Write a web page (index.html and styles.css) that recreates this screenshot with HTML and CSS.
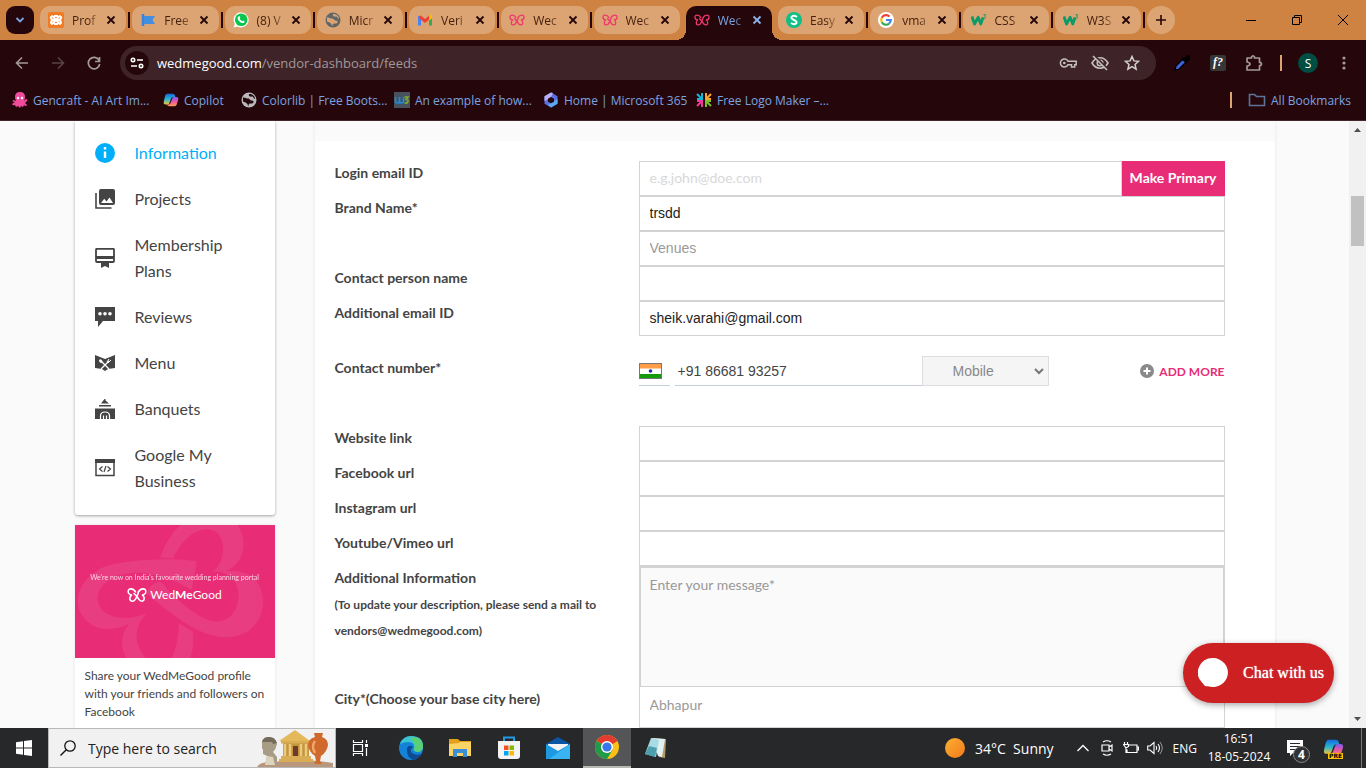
FILE: index.html
```html
<!DOCTYPE html>
<html lang="en">
<head>
<meta charset="utf-8">
<title>WedMeGood vendor dashboard</title>
<link rel="stylesheet" href="styles.css">
</head>
<body>
<svg class="defs" aria-hidden="true">
  <symbol id="x" viewBox="0 0 10 10"><path d="M1.500 1.500l7 7M8.500 1.500l-7 7" fill="none" stroke="currentColor" stroke-width="1.800"/></symbol>
  <symbol id="butterfly" viewBox="0 0 20 16"><path d="M8.500 5C6.500 1 1.200.8 1.200 4.500 1.200 6.500 3 8 5 8 2.200 9 2 13.800 5 14.200 8.500 14.500 9 11 10 9 11 7 11.500 5.500 11.500 4.500M11.500 5C13.500 1 18.800.8 18.800 4.500 18.800 6.500 17 8 15 8 17.800 9 18 13.800 15 14.200 12 14.500 11.500 11.500 10 9.500L7 6.500" fill="none" stroke="currentColor" stroke-width="1.600" stroke-linecap="round"/></symbol>
  <symbol id="globe" viewBox="0 0 16 16"><circle cx="8" cy="8" r="7.500" fill="currentColor"/><path d="M2 5.500C4 5 5 6.500 7 6.500S8.500 8.500 11 8.500 13 12 10 11.500 8 14 7 14C7 11.500 5 10.500 2 9.500ZM8 2C7 4 9.500 5 11 4.500S12 6.500 14 7C14 4 11.500 2 8 2Z" fill="var(--hole)"/></symbol>
  <symbol id="w3" viewBox="0 0 18 16"><path d="M1 4l3 8.500L8 5l3 7.500L13.500 5" fill="none" stroke="#0a9b68" stroke-width="3.200" stroke-linejoin="round"/><path d="M14 2h2.500l-1.300 1.800q1.800.2.800 2t-2.200.2" fill="none" stroke="#0a9b68"/></symbol>
  <symbol id="copilot" viewBox="0 0 18 16"><linearGradient id="cg1" x1="0" y1="0" x2="0" y2="1"><stop stop-color="#1769e0"/><stop offset=".5" stop-color="#26b6d0"/><stop offset="1" stop-color="#f0c23c"/></linearGradient><linearGradient id="cg2" x1="0" y1="0" x2="0" y2="1"><stop stop-color="#7a5cf0"/><stop offset=".5" stop-color="#e955a8"/><stop offset="1" stop-color="#ff9a4a"/></linearGradient><path d="M5 1h6q2 0 2.500 2l.5 2H11q-1.500 0-2 1.500L7 12q-.5 1-1.500 1H3Q0 13 1 9L2.500 3Q3.200 1 5 1Z" fill="url(#cg1)"/><path d="M13 15H7Q5 15 4.500 13h2q1.500 0 2-1.500L10.500 6q.5-1.500 2-1.500H15Q18 4.500 17 8l-1.500 5q-.7 2-2.500 2Z" fill="url(#cg2)"/></symbol>
</svg>

<header class="browser">
  <div class="tabstrip">
    <button class="tabsearch" aria-label="Search tabs"><svg width="10" height="8" viewBox="0 0 10 8"><path d="M1.500 2L5 5.500 8.500 2" fill="none" stroke="#7aa5e6" stroke-width="1.800"/></svg></button>
    <nav class="tabs" aria-label="Tabs">
      <div class="tab"><svg class="fav" viewBox="0 0 16 16"><rect width="16" height="16" rx="2" fill="#f17b22"/><path d="M8 8C6 6 5 3.500 3.500 4.500S3 7 5 8c-2 1-2.500 2.500-1.500 3.500S6 10 8 8s3-4.500 4.500-3.500S13 7 11 8c2 1 2.500 2.500 1.500 3.500S10 10 8 8ZM6 4h4M6 12h4" fill="none" stroke="#fff" stroke-width="2"/></svg><span class="title">Prof</span><button class="close" aria-label="Close"><svg><use href="#x"/></svg></button></div>
      <div class="tab"><svg class="fav" viewBox="0 0 16 16"><path d="M3 2v12" stroke="#3b82d8" stroke-width="2.500"/><path d="M4 4h11l-2.500 4 2.500 4H4Z" fill="#428fe0"/></svg><span class="title">Free</span><button class="close" aria-label="Close"><svg><use href="#x"/></svg></button></div>
      <div class="tab"><svg class="fav" viewBox="0 0 16 16"><path d="M.5 15.500L1.800 12A7.500 7.500 0 1 1 4.500 14.500Z" fill="#fff"/><circle cx="8.200" cy="7.800" r="6.300" fill="#08c54e"/><path d="M5.500 4.500q1.500-.7 1.800 1.300L6.700 7q1 1.600 2.600 2.200l1-.8q2 .7 1 2-1.300 1.500-4-.2T4.500 6.300q0-1.300 1-1.800Z" fill="#fff"/></svg><span class="title">(8) V</span><button class="close" aria-label="Close"><svg><use href="#x"/></svg></button></div>
      <div class="tab"><svg class="fav globe"><use href="#globe"/></svg><span class="title">Micr</span><button class="close" aria-label="Close"><svg><use href="#x"/></svg></button></div>
      <div class="tab"><svg class="fav" viewBox="0 0 16 16"><path d="M2.500 13.500V4" stroke="#4285f4" stroke-width="3"/><path d="M13.500 13.500V4" stroke="#34a853" stroke-width="3"/><path d="M2.500 4.500L8 9l5.500-4.500" fill="none" stroke="#ea4335" stroke-width="3"/><path d="M12 3.500l3-1v4l-3 2Z" fill="#fbbc04"/></svg><span class="title">Veri</span><button class="close" aria-label="Close"><svg><use href="#x"/></svg></button></div>
      <div class="tab"><svg class="fav pink"><use href="#butterfly"/></svg><span class="title">Wec</span><button class="close" aria-label="Close"><svg><use href="#x"/></svg></button></div>
      <div class="tab nosep"><svg class="fav pink"><use href="#butterfly"/></svg><span class="title">Wec</span><button class="close" aria-label="Close"><svg><use href="#x"/></svg></button></div>
      <div class="tab active"><svg class="fav pink"><use href="#butterfly"/></svg><span class="title">Wec</span><button class="close" aria-label="Close"><svg><use href="#x"/></svg></button></div>
      <div class="tab"><svg class="fav" viewBox="0 0 16 16"><circle cx="8" cy="8" r="8" fill="#0fbf86"/><path d="M11 5Q8 3 6 4.500T8 8t2 3.500T5 11" fill="none" stroke="#fff" stroke-width="2"/></svg><span class="title">Easy</span><button class="close" aria-label="Close"><svg><use href="#x"/></svg></button></div>
      <div class="tab"><svg class="fav" viewBox="0 0 16 16"><circle cx="8" cy="8" r="8" fill="#fff"/><g fill="none" stroke-width="2.200"><path d="M11.500 4.600A4.800 4.800 0 0 0 3.800 5.700" stroke="#ea4335"/><path d="M3.800 5.700a4.800 4.800 0 0 0 0 4.600" stroke="#fbbc05"/><path d="M3.800 10.300a4.800 4.800 0 0 0 7.300 1.300" stroke="#34a853"/><path d="M11.100 11.600A4.800 4.800 0 0 0 12.800 8H8" stroke="#4285f4"/></g></svg><span class="title">vma</span><button class="close" aria-label="Close"><svg><use href="#x"/></svg></button></div>
      <div class="tab"><svg class="fav"><use href="#w3"/></svg><span class="title">CSS</span><button class="close" aria-label="Close"><svg><use href="#x"/></svg></button></div>
      <div class="tab"><svg class="fav"><use href="#w3"/></svg><span class="title">W3S</span><button class="close" aria-label="Close"><svg><use href="#x"/></svg></button></div>
    </nav>
    <button class="newtab" aria-label="New tab"><svg width="12" height="12" viewBox="0 0 12 12"><path d="M6 1v10M1 6h10" stroke="#25070b" stroke-width="1.600"/></svg></button>
    <div class="winctl">
      <button aria-label="Minimize"><svg width="10" height="10"><path d="M0 5.500h10" stroke="#000"/></svg></button>
      <button aria-label="Restore"><svg width="10" height="10"><path d="M.5 2.500h7v7h-7ZM2.500 2.500v-2h7v7h-2" fill="none" stroke="#000"/></svg></button>
      <button aria-label="Close window"><svg width="10" height="10"><path d="M0 0l10 10M10 0L0 10" stroke="#000"/></svg></button>
    </div>
  </div>

  <div class="toolbar">
    <button class="tool" aria-label="Back"><svg width="14" height="14" viewBox="0 0 14 14"><path d="M13 7H2M7 1.500L1.500 7 7 12.500" fill="none" stroke="#a3999b" stroke-width="1.600"/></svg></button>
    <button class="tool" aria-label="Forward" disabled><svg width="14" height="14" viewBox="0 0 14 14"><path d="M1 7h11M7 1.500L12.500 7 7 12.500" fill="none" stroke="#584346" stroke-width="1.600"/></svg></button>
    <button class="tool" aria-label="Reload"><svg width="14" height="14" viewBox="0 0 14 14"><path d="M12 4.200A5.700 5.700 0 1 0 12.700 8M12.500 1v4.500H8" fill="none" stroke="#a3999b" stroke-width="1.700"/></svg></button>
    <div class="omnibox">
      <button class="site" aria-label="Site information"><svg width="14" height="12" viewBox="0 0 14 12"><g fill="none" stroke="#fff" stroke-width="1.600"><circle cx="3" cy="3" r="1.700"/><path d="M7 3h6M1 9h6"/><circle cx="11" cy="9" r="1.700"/></g></svg></button>
      <div class="url" role="textbox" aria-label="Address"><b>wedmegood.com</b>/vendor-dashboard/feeds</div>
      <button class="omni" aria-label="Passwords"><svg width="18" height="12" viewBox="0 0 18 12"><path d="M9 4.200h8.200v3.500h-1.500v2.200h-3.200V7.700H9A4 4 0 1 1 9 4.200Z" fill="none" stroke="#c6bfc0" stroke-width="1.500"/><circle cx="5.300" cy="6" r="1.300" fill="#c6bfc0"/></svg></button>
      <button class="omni" aria-label="Tracking blocked"><svg width="18" height="16" viewBox="0 0 18 16"><path d="M1 8Q4 2.800 9 2.800T17 8Q14 13.200 9 13.200T1 8Z" fill="none" stroke="#c6bfc0" stroke-width="1.600"/><circle cx="9" cy="8" r="2.800" fill="none" stroke="#c6bfc0" stroke-width="1.500"/><path d="M3.500.8l13 13" stroke="#3e2428" stroke-width="2"/><path d="M2 1l14 14" stroke="#c6bfc0" stroke-width="1.600"/></svg></button>
      <button class="omni" aria-label="Bookmark"><svg width="16" height="16" viewBox="0 0 16 16"><path d="M8 1.500l1.900 4.400 4.700.4L11 9.500l1.100 4.700L8 11.700l-4.100 2.500L5 9.500 1.400 6.300l4.700-.4Z" fill="none" stroke="#d5cfd0" stroke-width="1.500"/></svg></button>
    </div>
    <button class="tool ext" aria-label="Color picker"><svg width="16" height="16" viewBox="0 0 16 16"><path d="M1 15l1-4 7-7 3 3-7 7Z" fill="#3d63d8" stroke="#000" stroke-width="1.200"/><path d="M8 3l5 5M9.500 5l4-4q2.500 0 2 2.500L12 7Z" fill="#000" stroke="#000" stroke-width="2"/></svg></button>
    <button class="tool ext fq" aria-label="Font finder"><i>f?</i></button>
    <button class="tool ext" aria-label="Extensions"><svg width="18" height="18" viewBox="0 0 18 18"><path d="M2 4h4.500V3q1.500-2.500 3 0v1h5v4.500h1q2 1.500 0 3h-1V16H2v-4q3-.5 3-2T2 8Z" fill="none" stroke="#a3999b" stroke-width="1.700" stroke-linejoin="round"/></svg></button>
    <span class="bar"></span>
    <button class="avatar">S</button>
    <button class="tool" aria-label="Menu"><svg width="4" height="14" viewBox="0 0 4 14" fill="#a3999b"><circle cx="2" cy="2" r="1.600"/><circle cx="2" cy="7" r="1.600"/><circle cx="2" cy="12" r="1.600"/></svg></button>
  </div>

  <nav class="bookmarks" aria-label="Bookmarks">
    <a href="#"><svg viewBox="0 0 16 16"><path d="M8 0q5 0 5 5 0 2-1 4l2-2q2 0 1 2l-2 2 2 2q-1 2-3 0l-1 2-2-1-1 2-2-2-2 1-1-2q-2 1-3-1l3-2Q0 10 1 8l3 1Q3 7 3 5 3 0 8 0Z" fill="#f24b9b"/><circle cx="6" cy="6" r="1.200" fill="#fff"/><circle cx="10" cy="6" r="1.200" fill="#fff"/></svg>Gencraft - AI Art Im...</a>
    <a href="#"><svg><use href="#copilot"/></svg>Copilot</a>
    <a href="#"><svg class="globe light"><use href="#globe"/></svg>Colorlib | Free Boots...</a>
    <a href="#"><svg viewBox="0 0 16 16"><path fill="#48525e" d="M0 0h16v16H0z"/><path d="M1.500 5v4q0 2 2 2t2-2V5v4q0 2 2 2t2-2V5" fill="none" stroke="#1c8cdb" stroke-width="1.600"/><path d="M10.500 5h3.500l-2 2.500q2.500 0 2 2t-3.500 1.500" fill="none" stroke="#7cae2d" stroke-width="1.600"/></svg>An example of how...</a>
    <a href="#"><svg viewBox="0 0 16 16"><path d="M8 .5l6.500 3.700v7.600L8 15.500 1.500 11.800V4.200Z" fill="#5d6fe0"/><path d="M8 .5L1.500 4.200v5L8 5l2-4Z" fill="#b9b0f8"/><path d="M8 15.500l6.500-3.700V7L8 11l-3 2Z" fill="#5aa9ee"/><path d="M8 5l3 1.700v3L8 11.300 5 9.700v-3Z" fill="#25070b"/></svg>Home | Microsoft 365</a>
    <a href="#"><svg viewBox="0 0 16 16" fill="none" stroke-width="2"><path d="M1 2l5 5M6 1v6H1" stroke="#12b9d6"/><path d="M15 2l-5 5M10 1v6h5" stroke="#f7a72c"/><path d="M1 14l5-5M6 15V9H1" stroke="#f0379b"/><path d="M15 14l-5-5M10 15V9h5" stroke="#78bd2a"/></svg>Free Logo Maker –...</a>
    <span class="bar"></span>
    <a href="#"><svg class="wide" viewBox="0 0 18 14"><path d="M1.500 12.500v-11h5l2 2h8v9Z" fill="none" stroke="#5d7399" stroke-width="1.600"/></svg>All Bookmarks</a>
  </nav>
</header>

<div class="viewport">
  <div class="page">
    <div class="container">
      <aside class="side">
        <nav class="menu">
          <a class="on" href="#"><svg viewBox="0 0 20 20"><circle cx="10" cy="10" r="10" fill="#00aff8"/><path d="M10 4v2.500M10 8.500v6.500" stroke="#fff" stroke-width="2.400"/></svg>Information</a>
          <a href="#"><svg viewBox="0 0 20 20"><path d="M1 4v15h15.500" fill="none" stroke="#444" stroke-width="1.600"/><path d="M6 0h12q2 0 2 2v12q0 2-2 2H6q-2 0-2-2V2q0-2 2-2Z" fill="#444"/><path d="M6 14l3.200-4.200 2.300 2.600L14.500 8.500 18 14Z" fill="#fff"/></svg>Projects</a>
          <a href="#"><svg viewBox="0 0 20 20"><path d="M2 .8h16q1 0 1 1V13q0 1-1 1H2q-1 0-1-1V1.800q0-1 1-1Z" fill="none" stroke="#444" stroke-width="1.800"/><path d="M1 8h18v3H1zM6 14h8v6l-4-2-4 2Z" fill="#444"/></svg>Membership Plans</a>
          <a href="#"><svg viewBox="0 0 20 20"><path d="M0 0h20v14H8l-5 6v-6H0Z" fill="#444"/><g fill="#fff"><circle cx="5" cy="6.800" r="1.800"/><circle cx="10" cy="6.800" r="1.800"/><circle cx="15" cy="6.800" r="1.800"/></g></svg>Reviews</a>
          <a href="#"><svg viewBox="0 0 20 20"><path d="M0 2l10 4 10-4v13l-7 1-3 2-3-2-7-1Z" fill="#444"/><path d="M6 8l8 8M14 8l-8 8" stroke="#fff" stroke-width="1.300"/><ellipse cx="5.800" cy="8.200" rx="2" ry="1.500" fill="#fff" transform="rotate(45 5.800 8.200)"/><path d="M12 9l2-3M13 10l3-3" stroke="#fff"/></svg>Menu</a>
          <a href="#"><svg viewBox="0 0 20 20"><path d="M9.500 0h1v1.500L14 4.500H6ZM4 6h12v1.500H4zM0 9.500h20V20H0Z" fill="#444"/><path d="M5.500 20v-3q0-4 4.500-4t4.500 4v3" fill="none" stroke="#fff" stroke-width="1.200"/><path d="M8.500 20v-3.500M11.500 20v-3.500" stroke="#fff" stroke-width="1.200"/></svg>Banquets</a>
          <a href="#"><svg viewBox="0 0 20 20"><path d="M1 2h18v15.500H1Z" fill="none" stroke="#444" stroke-width="1.500"/><path d="M0 1h20v4H0z" fill="#444"/><path d="M7.500 8.500L4.500 11l3 2.500M12.500 8.500l3 2.500-3 2.500M11 8l-2 6" fill="none" stroke="#444" stroke-width="1.200"/></svg>Google My Business</a>
        </nav>
        <section class="share">
          <div class="promo">
            <svg class="mark" viewBox="0 0 600 400" preserveAspectRatio="xMidYMid slice"><g opacity=".08"><path fill="#fff" d="M255 98C275 50 295 10 345-20H470C520 20 520 115 450 140C535 130 565 180 564 235C562 300 510 338 455 337C390 335 330 305 215 205Q230 175 247 172Q262 167 275 192C340 260 395 293 430 290C480 285 495 230 490 200C485 160 450 135 412 141C450 115 455 50 425 22C385-5 325 30 295 100Z"/><path fill="#fff" d="M365 110C300 95 110 105 70 135C-15 185-10 285 75 310Q145 320 180 280C140 310 130 360 155 400H212C175 355 175 305 215 265C170 285 120 285 85 260C50 220 70 180 120 155C190 130 270 150 350 195Z"/><path fill="#fff" d="M312 295L353 320Q358 370 345 400H290Q312 350 312 295Z"/></g></svg>
            <p>We're now on India's favourite wedding planning portal</p>
            <div class="logo"><svg width="20" height="16"><use href="#butterfly"/></svg><span>Wed<b>Me</b>Good</span></div>
          </div>
          <p class="copy">Share your WedMeGood profile with your friends and followers on Facebook</p>
        </section>
      </aside>

      <main class="panel">
        <form class="form">
          <div class="row"><label for="login">Login email ID</label><div class="pair"><input id="login" type="email" placeholder="e.g.john@doe.com"><button type="button">Make Primary</button></div></div>
          <div class="row"><label for="brand">Brand Name*</label><input id="brand" value="trsdd"></div>
          <div class="row"><span></span><input aria-label="Category" class="muted" value="Venues"></div>
          <div class="row"><label for="person">Contact person name</label><input id="person"></div>
          <div class="row"><label for="email2">Additional email ID</label><input id="email2" value="sheik.varahi@gmail.com"></div>
          <div class="row contact"><label for="phone">Contact number*</label>
            <div class="phone">
              <span class="flag"><svg width="23" height="16"><path fill="#fff" d="M0 0h23v16H0z"/><path fill="#ff9e46" d="M0 0h23v5.500H0z"/><path fill="#149a0b" d="M0 11h23v5H0z"/><circle cx="11.500" cy="8" r="1.800" fill="#2226a8"/><path d="M.5.5h22v15H.5Z" fill="none" stroke="#777"/></svg></span>
              <input id="phone" type="tel" value="+91 86681 93257">
              <span class="kind"><select aria-label="Number type"><option>Mobile</option></select><svg width="10" height="7" viewBox="0 0 10 7"><path d="M1 1l4 4 4-4" fill="none" stroke="#777" stroke-width="2"/></svg></span>
              <button type="button" class="more"><svg width="14" height="14" viewBox="0 0 14 14"><circle cx="7" cy="7" r="7" fill="#8a8a8a"/><path d="M7 3.500v7M3.500 7h7" stroke="#fff" stroke-width="2"/></svg>ADD MORE</button>
            </div></div>
          <div class="row"><label for="web">Website link</label><input id="web"></div>
          <div class="row"><label for="fb">Facebook url</label><input id="fb"></div>
          <div class="row"><label for="ig">Instagram url</label><input id="ig"></div>
          <div class="row"><label for="yt">Youtube/Vimeo url</label><input id="yt"></div>
          <div class="row"><label for="info">Additional Information<small>(To update your description, please send a mail to vendors@wedmegood.com)</small></label><textarea id="info" placeholder="Enter your message*"></textarea></div>
          <div class="row"><label for="city">City*(Choose your base city here)</label><select id="city" class="city"><option>Abhapur</option></select></div>
        </form>
      </main>
    </div>
    <button class="chat"><svg width="30" height="30" viewBox="0 0 30 30"><path d="M15 0a15 14.500 0 1 1-5 28.200q-2 .5-3.500-.7L4 24.500A15 14.500 0 0 1 15 0Z" fill="#fff"/></svg>Chat with us</button>
  </div>
  <div class="scroll" aria-hidden="true">
    <svg width="17" height="17"><path d="M5 11h7L8.500 7Z" fill="#505050"/></svg>
    <span class="thumb"></span>
    <svg width="17" height="17"><path d="M5 6h7l-3.500 4Z" fill="#505050"/></svg>
  </div>
</div>

<footer class="taskbar">
  <button class="task start" aria-label="Start"><svg width="16" height="16" viewBox="0 0 16 16" fill="#fff"><path d="M0 2.200L7 1.200v6.300H0ZM8 1l8-1v7.500H8ZM0 8.500h7v6.300L0 13.800ZM8 8.500h8V16l-8-1Z"/></svg></button>
  <label class="search"><svg width="16" height="16" viewBox="0 0 16 16"><circle cx="10" cy="6" r="5.200" fill="none" stroke="#111" stroke-width="1.300"/><path d="M6.300 9.700L.5 15.500" stroke="#111" stroke-width="1.400"/></svg><input placeholder="Type here to search">
    <svg class="art" width="78" height="38" viewBox="0 0 78 38"><path d="M0 38Q4 32 12 34 40 28 76 34V38Z" fill="#b9977c"/><path d="M26 14h26v16H26z" fill="#c5963f"/><path d="M22 12L38 1 53 12Z" fill="#e4b95c"/><path d="M24 12h28v2.500H24zM24 27h30v3H24zM22 30h34v3H22z" fill="#d9ad55"/><path d="M28 15v12M33 15v12M44 15v12M49 15v12" stroke="#ecca7e" stroke-width="2.500"/><path d="M36 17h5v10h-5z" fill="#6b3d28"/><path d="M5 13Q6 8 12 8q7 0 8 7-1 5-4 8l4 5v8H8l2-9-4-2v-4l-1-2Z" fill="#a89c86"/><path d="M5 13q1-5 7-5 6 0 8 6l-4 1-1-2H5Z" fill="#756b5a"/><path d="M10 27l6 1 2 8H8Z" fill="#ddd4c0"/><path d="M57 4h9l-1 4q6 2 6 8-1 7-7 11l-1 5 2 3h-8l2-3-1-5q-6-4-7-11 0-6 7-8Z" fill="#cf6a2c"/><path d="M58 12q-4 5 0 12" fill="none" stroke="#f0a56d" stroke-width="2.500"/></svg></label>
  <button class="task view" aria-label="Task view"><svg width="17" height="16" viewBox="0 0 17 16"><path d="M1.500 0v2.500h9V0M1.500 16v-2.500h9V16M1.500 4.500h9v7h-9ZM14.500 0v3M14.500 8v8" fill="none" stroke="#fff" stroke-width="1.200"/><path d="M13 4h3v3h-3z" fill="#fff"/></svg></button>
  <button class="task" aria-label="Edge"><svg width="24" height="24" viewBox="0 0 24 24"><circle cx="12" cy="12" r="12" fill="#1283d8"/><path d="M1 8Q4 0 12 0q12 0 12 10 0 6-6 6-5-1-3-4 1-6-6-6-4 0-8 2Z" fill="#3cc3d0"/><path d="M14 1q10 1 10 9 0 6-6 6l-3-2q3-8-4-11Z" fill="#5fd266" opacity=".85"/><path d="M8 12q-1 9 6 12 6-1 8-6-5 2-9-1-3-3 1-6-4-3-6 1Z" fill="#0f4b92"/></svg></button>
  <button class="task" aria-label="File Explorer"><svg width="22" height="18" viewBox="0 0 22 18"><path d="M0 0h9l2 2h11v15H0Z" fill="#e3a01b"/><path d="M0 5l10-1 1-1h11v14H0Z" fill="#fcd466"/><path d="M4 18V10h14v8h-4v-4H8v4Z" fill="#3b8fd6"/></svg></button>
  <button class="task" aria-label="Store"><svg width="24" height="24" viewBox="0 0 24 24"><path d="M7 7V1.500h10V7" fill="none" stroke="#1e9be2" stroke-width="2"/><path d="M1 5h22v15q0 3-3 3H4q-3 0-3-3Z" fill="#f3f3f3"/><path d="M7 9.500h4.500V14H7z" fill="#f25022"/><path d="M12.500 9.500H17V14h-4.500z" fill="#7fba00"/><path d="M7 15h4.500v4.500H7z" fill="#00a4ef"/><path d="M12.500 15H17v4.500h-4.500z" fill="#ffb900"/></svg></button>
  <button class="task" aria-label="Mail"><svg width="24" height="22" viewBox="0 0 24 22"><path d="M0 7l12-7 12 7v15H0Z" fill="#0b56a4"/><path d="M2 7h20v8H2Z" fill="#f1f3f5"/><path d="M0 7l12 7 12-7v15H0Z" fill="#1c99e0"/><path d="M24 7L3 22h21Z" fill="#38b4f2"/></svg></button>
  <button class="task current" aria-label="Chrome"><svg width="24" height="24" viewBox="0 0 24 24"><circle cx="12" cy="12" r="12" fill="#fbc116"/><path d="M12 12L1.600 6A12 12 0 0 1 22.400 6Z" fill="#e33b2e"/><path d="M1.600 6A12 12 0 0 0 12 24l5.500-9L12 12Z" fill="#219a4a"/><path d="M12 6h10.400L12 12Z" fill="#e33b2e"/><circle cx="12" cy="12" r="6" fill="#fff"/><circle cx="12" cy="12" r="4.600" fill="#3477ea"/></svg></button>
  <button class="task" aria-label="Notepad"><svg width="24" height="22" viewBox="0 0 24 22"><path d="M8 1l14 1-1 19-6-1Z" fill="#b59a6a"/><path d="M8 1l13 1-3 18-4-1Z" fill="#e1f0f3"/><path d="M7 1l8 2-3 17-11-3Z" fill="#a8dbe3"/><path d="M5 9l8 2-2 9-10-3Z" fill="#4d9fae"/></svg></button>
  <div class="tray">
    <button class="weather"><span class="sun"></span>34°C&nbsp; Sunny</button>
    <button class="ti" aria-label="Hidden icons"><svg width="12" height="8"><path d="M.5 7L6 1.500 11.500 7" fill="none" stroke="#fff" stroke-width="1.300"/></svg></button>
    <button class="ti" aria-label="Camera"><svg width="12" height="16" viewBox="0 0 12 16"><path d="M1 5h7v6H1ZM8 7l3-2v6L8 9M2 2q4-2.500 8 0M2 14q4 2.500 8 0" fill="none" stroke="#fff" stroke-width="1.200"/></svg></button>
    <button class="ti" aria-label="Battery"><svg width="16" height="12" viewBox="0 0 16 12"><path d="M6 3h8v7.500H4V7.500M14 5h1.500v3H14M1.500 0v2.500M4.500 0v2.500M.5 2.500h5v2L3 6Z M3 6v4.500h2" fill="none" stroke="#fff" stroke-width="1.200"/></svg></button>
    <button class="ti" aria-label="Volume"><svg width="16" height="14" viewBox="0 0 16 14"><path d="M.7 5v4H3l4 3.500v-11L3 5ZM9 5q1.500 2 0 4M11 3q3 4 0 8" fill="none" stroke="#fff" stroke-width="1.100"/><path d="M13 1q4.500 6 0 12" fill="none" stroke="#999"/></svg></button>
    <button class="lang">ENG</button>
    <div class="clock"><span>16:51</span><span>18-05-2024</span></div>
    <button class="note" aria-label="Notifications"><svg width="16" height="16" viewBox="0 0 16 16"><path d="M0 0h16v13H6l-3 3v-3H0Z" fill="#fff"/><path d="M3 3.500h10M3 6.500h10M3 9.500h6" stroke="#26282a" stroke-width="1.200"/></svg><span>4</span></button>
    <button class="pilot" aria-label="Copilot"><svg width="21" height="20"><use href="#copilot"/></svg><span>PRE</span></button>
    <span class="peek"></span>
  </div>
</footer>
</body>
</html>
```
FILE: styles.css
```css
* { box-sizing: border-box; }
body {
  margin: 0;
  height: 100vh;
  display: flex;
  flex-direction: column;
  overflow: hidden;
  font-family: Lato, "Open Sans", sans-serif;
  color: #444;
}
button { border: 0; padding: 0; background: none; font: inherit; color: inherit; }
p { margin: 0; }
a { color: inherit; text-decoration: none; }
.defs { position: absolute; width: 0; height: 0; }

/* Browser frame */
.browser { flex: none; background: #25070b; border-bottom: 1px solid #42272b; font-family: "Open Sans", "Noto Sans", sans-serif; font-size: 12px; }
.tabstrip { display: flex; height: 40px; background: #cf8343; padding: 6px 0 0 6px; }
.tabsearch { width: 28px; height: 28px; border-radius: 9px; background: #25070b; margin-right: 6px; display: grid; place-items: center; }
.tabs { flex: 1; display: flex; gap: 6px; min-width: 0; }
.tab { position: relative; flex: 1 1 0; min-width: 0; height: 28px; padding: 0 10px 0 8px; display: flex; align-items: center; border-radius: 10px; background: #dda473; color: #45200f; }
.tab::after { content: ""; position: absolute; right: -4px; top: 6px; width: 2px; height: 16px; background: #25070b; }
.fav { width: 16px; height: 16px; flex: none; margin-right: 8px; }
.globe { color: #5f6668; --hole: #dda473; }
.globe.light { color: #b9b9bd; --hole: #25070b; margin: 0; }
.pink { color: #f0356f; }
.title { flex: 1; min-width: 0; white-space: nowrap; mask-image: linear-gradient(90deg, #000 60%, rgba(0, 0, 0, .3)); }
.close { width: 10px; height: 10px; flex: none; margin-left: 8px; color: #25070b; display: flex; }
.close svg { width: 10px; height: 10px; }
.tab.active { height: 34px; padding-bottom: 6px; border-radius: 10px 10px 0 0; background: #25070b; color: #7ba3e0; }
.active .close { color: #8db2ec; }
.tab.nosep::after { display: none; }
.tab.active::before, .tab.active::after { content: ""; position: absolute; top: auto; bottom: 0; width: 10px; height: 10px; }
.tab.active::before { left: -10px; background: radial-gradient(circle at 0 0, transparent 10px, #25070b 10px); }
.tab.active::after { right: -10px; background: radial-gradient(circle at 100% 0, transparent 10px, #25070b 10px); }
.newtab { width: 28px; height: 28px; border-radius: 50%; background: #dda473; margin: 0 53px 0 6px; display: grid; place-items: center; }
.winctl { display: flex; height: 28px; }
.winctl button { width: 46px; display: grid; place-items: center; }

.toolbar { display: flex; align-items: center; height: 46px; padding: 0 4px; }
.tool { width: 36px; height: 34px; display: grid; place-items: center; }
.omnibox { flex: 1; display: flex; align-items: center; height: 34px; margin: 0 8px 0 8px; padding: 0 8px 0 5px; border-radius: 17px; background: #3e2428; }
.site { width: 24px; height: 24px; border-radius: 50%; background: #25070b; display: grid; place-items: center; }
.url { flex: 1; margin-left: 8px; font-size: 13px; color: #a3979a; white-space: nowrap; }
.url b { font-weight: 400; color: #fff; }
.omni { width: 32px; display: grid; place-items: center; }
.fq i { width: 16px; height: 16px; border-radius: 2px; background: #343638; color: #fff; font: italic bold 12px/15px "Liberation Serif", serif; text-align: center; }
.bar { width: 2px; height: 16px; background: #dda473; }
.toolbar .bar { margin: 0 16px 0 8px; }
.avatar { width: 20px; height: 20px; margin-right: 8px; border-radius: 50%; background: #004d43; color: #fff; }

.bookmarks { display: grid; grid-template-columns: 151px 78px 153px 149px 153px 1fr 18px auto; align-items: center; height: 34px; padding: 0 15px 6px 12px; color: #7ba3e0; white-space: nowrap; }
.bookmarks a { display: flex; align-items: center; gap: 5px; }
.bookmarks svg { width: 16px; height: 16px; flex: none; }
.bookmarks svg.wide { width: 18px; height: 14px; }

/* Page */
.viewport { flex: 1; min-height: 0; display: flex; }
.page { position: relative; flex: 1; min-width: 0; overflow: hidden; background: #fafafa; }
.container { max-width: 1200px; margin: 0 auto; display: grid; grid-template-columns: 200px 1fr; gap: 40px; }
.menu { padding: 10px 0; background: #fff; border-radius: 0 0 3px 3px; box-shadow: 0 1px 3px rgba(0, 0, 0, .35); }
.menu a { display: flex; align-items: center; gap: 20px; padding: 9px 20px 11px; font-size: 16px; line-height: 26px; }
.menu svg { width: 20px; height: 20px; flex: none; }
.menu .on { color: #00aff8; }
.share { margin-top: 10px; background: #fff; box-shadow: 0 0 4px rgba(0, 0, 0, .08); }
.promo { position: relative; height: 133px; background: #e82c76; color: #fff; padding-top: 46px; text-align: center; overflow: hidden; }
.mark { position: absolute; inset: 0; width: 100%; height: 100%; }
.promo p { font-size: 7px; line-height: 12px; opacity: .8; }
.logo { display: flex; justify-content: center; align-items: center; gap: 3px; margin-top: 4px; font-size: 12px; line-height: 16px; }
.copy { padding: 9px 10px 20px; font-size: 12px; line-height: 18px; }

.panel { border-top: 20px solid #fafafa; padding: 20px 50px 0 20px; background: #fff; box-shadow: 0 0 4px rgba(0, 0, 0, .08); }
.row { display: grid; grid-template-columns: 304px 1fr; }
label { font-size: 14px; font-weight: 700; line-height: 24px; }
label small { display: block; margin-top: 2px; font-size: 12px; padding-right: 30px; line-height: 26px; }
.row input, .row textarea, .row select { display: block; width: 100%; min-width: 0; margin: 0; padding: 0 10px 2px; border: 1px solid #d3d3d3; border-radius: 0; background: #fff; font: 14px "Liberation Sans", Arial, sans-serif; color: #222; outline: 0; }
.row input { height: 35px; }
.row ::placeholder { font-family: Lato, sans-serif; color: #d8d8d8; }
.row input.muted { color: #999; }
.pair { display: flex; }
.pair button { flex: none; padding: 0 8px 2px; background: #e82c76; color: #fff; font-size: 14px; font-weight: 700; }
.row.contact { margin: 20px 0 40px; }
.phone { display: flex; height: 30px; }
.flag { flex: none; width: 31px; margin-right: 5px; padding-top: 7px; border-bottom: 1px solid #c5ced6; }
.flag svg { display: block; }
.row .phone input { flex: 0 1 247px; height: 30px; padding: 0 3px; border-width: 0 0 1px; border-color: #c5ced6; color: #444; }
.kind { position: relative; flex: none; width: 127px; }
.row .kind select { height: 30px; padding: 0 30px; background: #f5f5f5; border-color: #ddd; color: #888; appearance: none; }
.kind svg { position: absolute; right: 5px; top: 12px; }
.more { display: flex; align-items: center; gap: 5px; margin-left: auto; font-size: 12px; font-weight: 700; color: #e82c76; }
.row textarea { height: 121px; padding: 7px 9px; border-width: 2px 2px 1px; background: #fafafa; resize: none; line-height: 20px; }
.row textarea::placeholder { color: #999; }
.row .city { height: 41px; border-top: 0; padding-bottom: 5px; appearance: none; font-family: Lato, sans-serif; color: #999; }
.chat { position: absolute; right: 15px; bottom: 25px; height: 60px; padding: 0 10px 0 15px; display: flex; align-items: center; gap: 15px; border-radius: 30px; background: #cc2022; box-shadow: 0 2px 6px rgba(0, 0, 0, .35); color: #fff; font: 16px "Liberation Serif", serif; text-shadow: 0 0 1px #fff; }

.scroll { flex: none; width: 17px; display: flex; flex-direction: column; align-items: center; background: #f1f1f1; }
.thumb { width: 13px; height: 50px; margin: 58px 0 auto; background: #c1c1c1; }

/* Taskbar */
.taskbar { flex: none; display: flex; height: 40px; background: #27282a; color: #fff; font-family: "Open Sans", "Noto Sans", sans-serif; font-size: 12px; }
.task { width: 48px; margin-right: 1px; display: grid; place-items: center; }
.task.start { margin: 0; }
.task.view { margin-right: 3px; }
.task.current { background: #545556; border-bottom: 2px solid #b9b9b4; }
.search { width: 288px; display: flex; align-items: center; padding-left: 11px; border: 1px solid #b8b8b8; background: #f1f1f1; }
.search input { flex: 1; min-width: 0; margin-left: 12px; padding: 0; border: 0; background: none; font: 14px "Open Sans", sans-serif; outline: 0; }
.search ::placeholder { color: #222; opacity: 1; }
.art { flex: none; align-self: flex-end; }
.tray { margin-left: auto; display: flex; align-items: center; }
.weather { display: flex; align-items: center; gap: 10px; margin-right: 17px; font-size: 14px; white-space: nowrap; }
.sun { width: 20px; height: 20px; border-radius: 50%; background: linear-gradient(135deg, #fbb034, #f27a1a); }
.ti { width: 24px; display: grid; place-items: center; }
.lang { margin: 0 10px 0 6px; }
.clock { display: flex; flex-direction: column; align-items: center; width: 64px; line-height: 18px; }
.note { position: relative; width: 16px; height: 16px; margin: 0 0 0 16px; }
.note svg { display: block; }
.note span { position: absolute; left: 6px; top: 6px; width: 17px; height: 17px; border: 1px solid #888; border-radius: 50%; background: #303234; font-weight: 700; line-height: 15px; text-align: center; }
.pilot { position: relative; width: 21px; height: 20px; margin: 0 17px 0 20px; }
.pilot svg { display: block; }
.pilot span { position: absolute; left: 5px; bottom: -1px; padding: 0 1px; background: #fdc500; color: #000; font: bold 6px/6px "DejaVu Sans", sans-serif; }
.peek { width: 5px; height: 40px; border-left: 1px solid #777; }
```
